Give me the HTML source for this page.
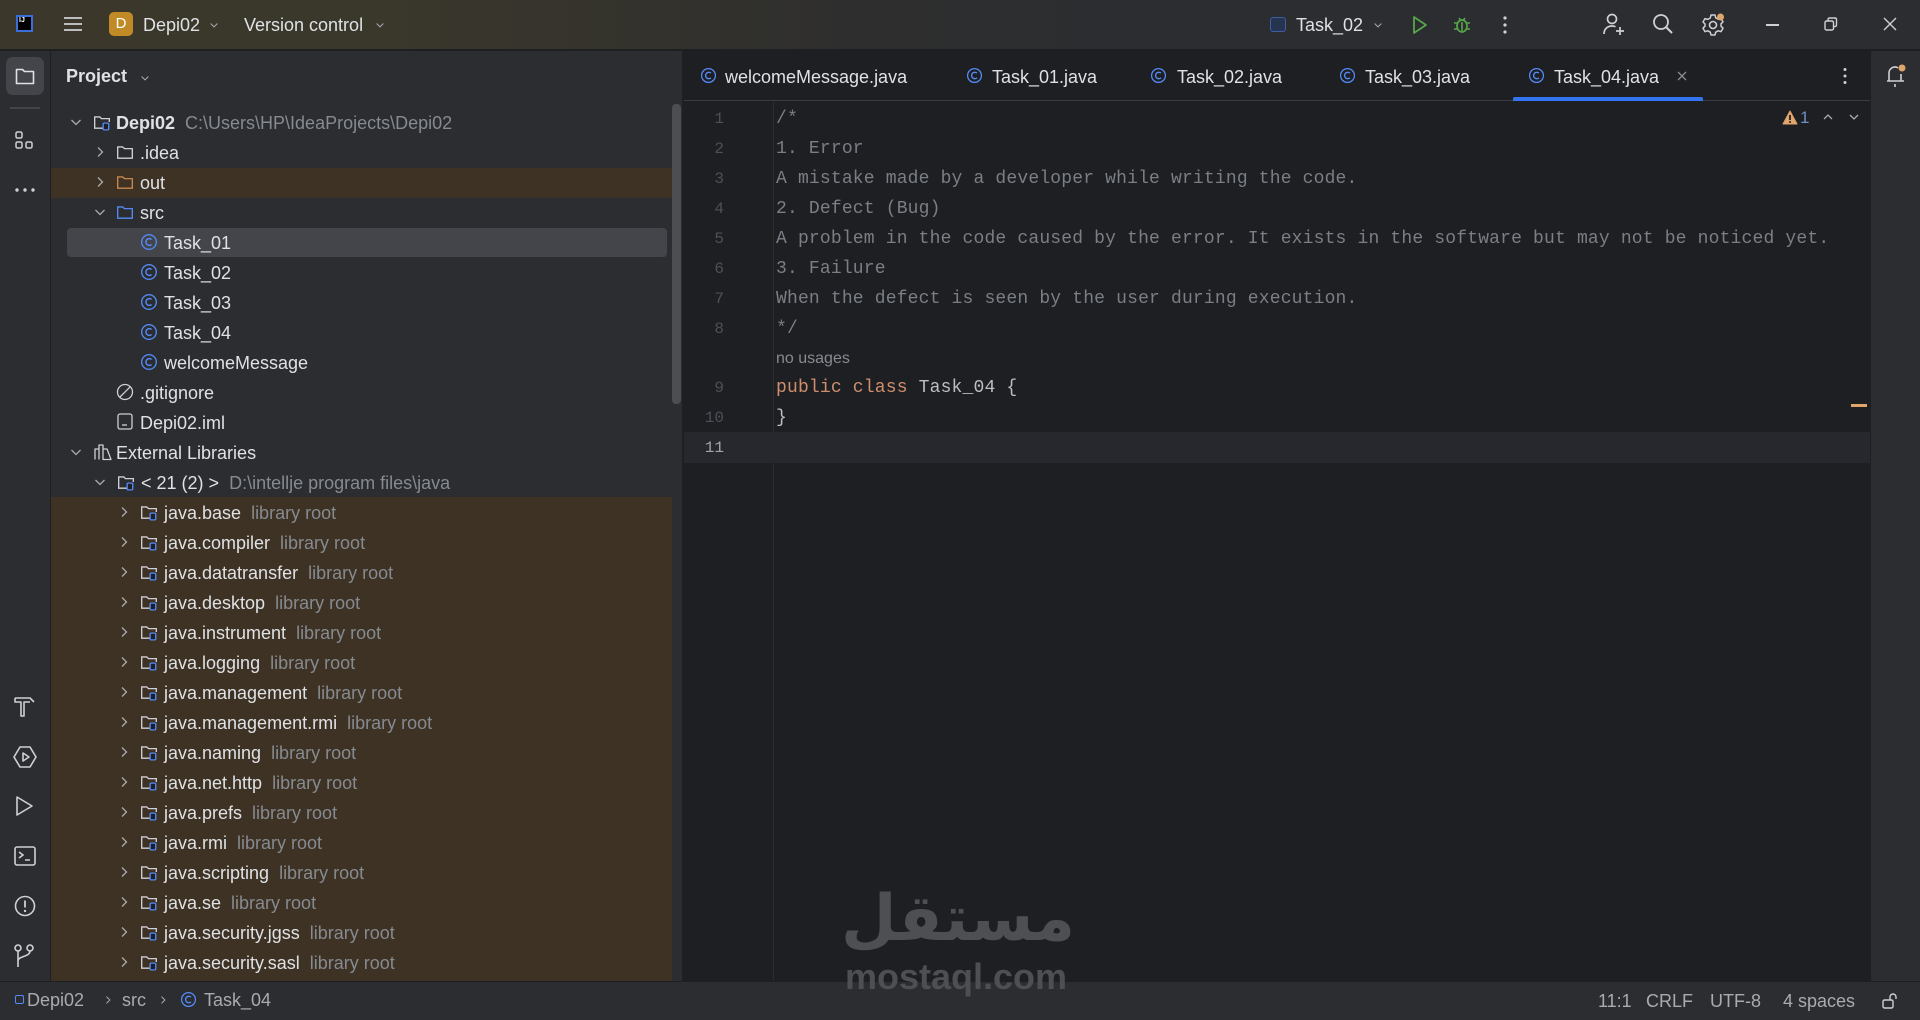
<!DOCTYPE html>
<html><head><meta charset="utf-8"><style>
*{margin:0;padding:0;box-sizing:border-box}
body{width:1920px;height:1020px;overflow:hidden;background:#1e1f22;font-family:"Liberation Sans",sans-serif;color:#dfe1e5;position:relative}
.a{position:absolute}
.t{position:absolute;font-size:18px;line-height:30px;white-space:nowrap}
.g{color:#868a91}
svg{position:absolute;overflow:visible}
.code{position:absolute;left:776px;font-family:"Liberation Mono",monospace;font-size:18px;letter-spacing:0.17px;line-height:30px;color:#7a7e85;white-space:pre}
.ln{position:absolute;width:50px;left:674px;text-align:right;font-family:"Liberation Mono",monospace;font-size:16px;line-height:30px;color:#4b5059}
</style></head><body>
<svg width="0" height="0" style="position:absolute">
<defs>
<symbol id="chr" viewBox="0 0 16 16"><path d="M6 3.5l4.5 4.5L6 12.5" fill="none" stroke="#a8abb0" stroke-width="1.3"/></symbol>
<symbol id="chd" viewBox="0 0 16 16"><path d="M3.5 6l4.5 4.5L12.5 6" fill="none" stroke="#a8abb0" stroke-width="1.3"/></symbol>
<symbol id="fold" viewBox="0 0 16 16"><path d="M1.5 3.5h4.5l1.5 1.5h7v8.5h-13z" fill="none" stroke="#ced0d6" stroke-width="1.2" stroke-linejoin="round"/></symbol>
<symbol id="foldo" viewBox="0 0 16 16"><path d="M1.5 3.5h4.5l1.5 1.5h7v8.5h-13z" fill="none" stroke="#c7874e" stroke-width="1.2" stroke-linejoin="round"/></symbol>
<symbol id="foldb" viewBox="0 0 16 16"><path d="M1.5 3.5h4.5l1.5 1.5h7v8.5h-13z" fill="none" stroke="#548af7" stroke-width="1.2" stroke-linejoin="round"/></symbol>
<symbol id="lib" viewBox="0 0 16 16"><path d="M8.5 13.5h-7v-10h4.5l1.5 1.5h7v3" fill="none" stroke="#ced0d6" stroke-width="1.2"/><rect x="9" y="9" width="5" height="6" rx="1" fill="#1e1f22" stroke="#548af7" stroke-width="1.2"/></symbol>
<symbol id="cls" viewBox="0 0 16 16"><circle cx="8" cy="8" r="6.5" fill="none" stroke="#548af7" stroke-width="1.2"/><path d="M10.3 5.8A3 3 0 1 0 10.3 10.2" fill="none" stroke="#548af7" stroke-width="1.3"/></symbol>
</defs></svg>

<!-- title bar -->
<div class="a" style="left:0;top:0;width:1920px;height:50px;background:linear-gradient(90deg,#3b382b 0%,#3a372b 20%,#2e2e2e 45%,#2b2d30 60%);border-bottom:1px solid #1e1f22"></div>
<div class="a" style="left:16px;top:15px;width:17px;height:17px;background:#000;border:2px solid #3b6fd8"></div>
<div class="a" style="left:19px;top:17px;font-size:7px;color:#fff;font-weight:bold">IJ</div>
<svg style="left:64px;top:16px" width="18" height="16"><path d="M0 2h18M0 8h18M0 14h18" stroke="#ced0d6" stroke-width="1.8"/></svg>
<div class="a" style="left:109px;top:12px;width:24px;height:24px;border-radius:5px;background:#c08b26;color:#fff;font-size:15px;text-align:center;line-height:24px">D</div>
<div class="t" style="left:143px;top:10px;color:#dfe1e5">Depi02</div>
<svg style="left:208px;top:19px" width="12" height="12"><use href="#chd" width="12" height="12"/></svg>
<div class="t" style="left:244px;top:10px">Version control</div>
<svg style="left:374px;top:19px" width="12" height="12"><use href="#chd" width="12" height="12"/></svg>
<div class="a" style="left:1270px;top:17px;width:16px;height:15px;border:1.5px solid #3d5fa6;border-radius:3px;background:#263450"></div>
<div class="t" style="left:1296px;top:10px">Task_02</div>
<svg style="left:1372px;top:19px" width="12" height="12"><use href="#chd" width="12" height="12"/></svg>
<svg style="left:1412px;top:15px" width="16" height="20"><path d="M2 2l12 8-12 8z" fill="none" stroke="#57a64a" stroke-width="1.8" stroke-linejoin="round"/></svg>
<svg style="left:1453px;top:14px" width="18" height="20"><ellipse cx="9" cy="12" rx="5" ry="6" fill="none" stroke="#57a64a" stroke-width="1.7"/><path d="M6 4l1.5 2M12 4l-1.5 2M1 9h3M14 9h3M1 15h3M14 15h3M9 8v9" stroke="#57a64a" stroke-width="1.6"/></svg>
<svg style="left:1503px;top:15px" width="4" height="20"><circle cx="2" cy="3" r="1.6" fill="#ced0d6"/><circle cx="2" cy="10" r="1.6" fill="#ced0d6"/><circle cx="2" cy="17" r="1.6" fill="#ced0d6"/></svg>
<svg style="left:1603px;top:13px" width="22" height="24"><circle cx="9" cy="6" r="4.5" fill="none" stroke="#ced0d6" stroke-width="1.7"/><path d="M1 21c0-5 3.5-8 8-8 1.5 0 2.5.3 3.5.8M17 14v8M13 18h8" fill="none" stroke="#ced0d6" stroke-width="1.7"/></svg>
<svg style="left:1652px;top:13px" width="22" height="22"><circle cx="9" cy="9" r="7" fill="none" stroke="#ced0d6" stroke-width="1.8"/><path d="M14 14l6 6" stroke="#ced0d6" stroke-width="2"/></svg>
<svg style="left:1702px;top:13px" width="24" height="24"><circle cx="11" cy="12" r="3.5" fill="none" stroke="#ced0d6" stroke-width="1.6"/><path d="M9 2h4l.7 2.8 2.5 1.4 2.8-.8 2 3.4-2 2v2.4l2 2-2 3.4-2.8-.8-2.5 1.4L13 22H9l-.7-2.8-2.5-1.4-2.8.8-2-3.4 2-2V11l-2-2 2-3.4 2.8.8 2.5-1.4z" fill="none" stroke="#ced0d6" stroke-width="1.5" stroke-linejoin="round"/><circle cx="18.5" cy="4" r="3.5" fill="#e0a56b"/></svg>
<div class="a" style="left:1766px;top:24px;width:13px;height:1.5px;background:#ced0d6"></div>
<svg style="left:1824px;top:17px" width="14" height="14"><rect x="1" y="4" width="8.5" height="9" rx="1.5" fill="none" stroke="#ced0d6" stroke-width="1.4"/><path d="M4 4V2.5c0-.8.5-1.5 1.5-1.5H11c1 0 1.5.5 1.5 1.5V8c0 1-.5 1.5-1.5 1.5H9.5" fill="none" stroke="#ced0d6" stroke-width="1.4"/></svg>
<svg style="left:1883px;top:17px" width="14" height="14"><path d="M1 1l12 12M13 1L1 13" stroke="#ced0d6" stroke-width="1.4"/></svg>

<!-- left strip -->
<div class="a" style="left:0;top:51px;width:51px;height:930px;background:#2b2d30;border-right:1px solid #1e1f22"></div>
<div class="a" style="left:6px;top:57px;width:38px;height:38px;border-radius:7px;background:#43454a"></div>
<svg style="left:15px;top:66px" width="20" height="20"><path d="M1.5 3.5h6l2 2h9v12h-17z" fill="none" stroke="#dfe1e5" stroke-width="1.6" stroke-linejoin="round"/></svg>
<div class="a" style="left:10px;top:107px;width:30px;height:2px;background:#43454a"></div>
<svg style="left:15px;top:131px" width="20" height="20"><rect x="1" y="1" width="6" height="6" rx="1.5" fill="none" stroke="#ced0d6" stroke-width="1.5"/><rect x="1" y="11" width="6" height="6" rx="1.5" fill="none" stroke="#ced0d6" stroke-width="1.5"/><rect x="11" y="11" width="6" height="6" rx="1.5" fill="none" stroke="#ced0d6" stroke-width="1.5"/></svg>
<svg style="left:15px;top:188px" width="22" height="4"><circle cx="2" cy="2" r="1.7" fill="#ced0d6"/><circle cx="10" cy="2" r="1.7" fill="#ced0d6"/><circle cx="18" cy="2" r="1.7" fill="#ced0d6"/></svg>
<svg style="left:14px;top:696px" width="22" height="22"><path d="M1 2h15l4 4M1 2v4h6v14h3V6h6" fill="none" stroke="#ced0d6" stroke-width="1.6" stroke-linejoin="round"/></svg>
<svg style="left:13px;top:745px" width="24" height="24"><path d="M7 2h10l6 10-6 10H7L1 12z" fill="none" stroke="#ced0d6" stroke-width="1.6" stroke-linejoin="round"/><path d="M10 8l6 4-6 4z" fill="none" stroke="#ced0d6" stroke-width="1.6" stroke-linejoin="round"/></svg>
<svg style="left:15px;top:796px" width="20" height="20"><path d="M2 1l15 9-15 9z" fill="none" stroke="#ced0d6" stroke-width="1.6" stroke-linejoin="round"/></svg>
<svg style="left:14px;top:846px" width="22" height="20"><rect x="1" y="1" width="20" height="18" rx="2" fill="none" stroke="#ced0d6" stroke-width="1.6"/><path d="M5 6l4 3-4 3M11 14h5" fill="none" stroke="#ced0d6" stroke-width="1.6"/></svg>
<svg style="left:14px;top:895px" width="22" height="22"><circle cx="11" cy="11" r="9.5" fill="none" stroke="#ced0d6" stroke-width="1.6"/><path d="M11 5.5v7" stroke="#ced0d6" stroke-width="1.8"/><circle cx="11" cy="16" r="1.2" fill="#ced0d6"/></svg>
<svg style="left:14px;top:944px" width="22" height="24"><circle cx="4" cy="4" r="3" fill="none" stroke="#ced0d6" stroke-width="1.6"/><circle cx="16" cy="4" r="3" fill="none" stroke="#ced0d6" stroke-width="1.6"/><path d="M4 7v16M16 7c0 6-12 5-12 10" fill="none" stroke="#ced0d6" stroke-width="1.6"/></svg>

<!-- project panel -->
<div class="a" style="left:51px;top:51px;width:632px;height:930px;background:#2b2d30;border-right:1px solid #1e1f22"></div>
<div class="t" style="left:66px;top:61px;font-weight:bold;font-size:18px">Project</div>
<svg style="left:139px;top:72px" width="12" height="12"><use href="#chd" width="12" height="12"/></svg>

<div class="a" style="left:51px;top:168px;width:621px;height:30px;background:#3d3223"></div>
<div class="a" style="left:51px;top:497px;width:621px;height:484px;background:#3d3223"></div>
<div class="a" style="left:67px;top:228px;width:600px;height:29px;border-radius:4px;background:#43454a"></div>
<div class="a" style="left:672px;top:104px;width:9px;height:300px;border-radius:4px;background:#4c4e52"></div>

<svg style="left:68px;top:114px" width="16" height="16"><use href="#chd" width="16" height="16"/></svg>
<svg style="left:93px;top:113px" width="18" height="18"><use href="#lib" width="18" height="18"/></svg>
<div class="t" style="left:116px;top:108px;font-weight:bold">Depi02 <span class="g" style="font-weight:normal">&nbsp;C:\Users\HP\IdeaProjects\Depi02</span></div>

<svg style="left:92px;top:144px" width="16" height="16"><use href="#chr" width="16" height="16"/></svg>
<svg style="left:116px;top:143px" width="18" height="18"><use href="#fold" width="18" height="18"/></svg>
<div class="t" style="left:140px;top:138px">.idea</div>

<svg style="left:92px;top:174px" width="16" height="16"><use href="#chr" width="16" height="16"/></svg>
<svg style="left:116px;top:173px" width="18" height="18"><use href="#foldo" width="18" height="18"/></svg>
<div class="t" style="left:140px;top:168px">out</div>

<svg style="left:92px;top:204px" width="16" height="16"><use href="#chd" width="16" height="16"/></svg>
<svg style="left:116px;top:203px" width="18" height="18"><use href="#foldb" width="18" height="18"/></svg>
<div class="t" style="left:140px;top:198px">src</div>

<svg style="left:140px;top:233px" width="18" height="18"><use href="#cls" width="18" height="18"/></svg>
<div class="t" style="left:164px;top:228px">Task_01</div>
<svg style="left:140px;top:263px" width="18" height="18"><use href="#cls" width="18" height="18"/></svg>
<div class="t" style="left:164px;top:258px">Task_02</div>
<svg style="left:140px;top:293px" width="18" height="18"><use href="#cls" width="18" height="18"/></svg>
<div class="t" style="left:164px;top:288px">Task_03</div>
<svg style="left:140px;top:323px" width="18" height="18"><use href="#cls" width="18" height="18"/></svg>
<div class="t" style="left:164px;top:318px">Task_04</div>
<svg style="left:140px;top:353px" width="18" height="18"><use href="#cls" width="18" height="18"/></svg>
<div class="t" style="left:164px;top:348px">welcomeMessage</div>

<svg style="left:116px;top:383px" width="18" height="18"><circle cx="9" cy="9" r="7.5" fill="none" stroke="#ced0d6" stroke-width="1.3"/><path d="M4 14L14 4" stroke="#ced0d6" stroke-width="1.3"/></svg>
<div class="t" style="left:140px;top:378px">.gitignore</div>
<svg style="left:117px;top:413px" width="16" height="18"><rect x="1" y="1" width="14" height="15" rx="2" fill="none" stroke="#ced0d6" stroke-width="1.3"/><path d="M5 12h5" stroke="#ced0d6" stroke-width="1.3"/></svg>
<div class="t" style="left:140px;top:408px">Depi02.iml</div>

<svg style="left:68px;top:444px" width="16" height="16"><use href="#chd" width="16" height="16"/></svg>
<svg style="left:94px;top:443px" width="18" height="18"><path d="M1 16.5V6h4v10.5M5 16.5V2h4v14.5M9 16.5V6h4l4 10.5z" fill="none" stroke="#ced0d6" stroke-width="1.3" stroke-linejoin="round"/></svg>
<div class="t" style="left:116px;top:438px">External Libraries</div>

<svg style="left:92px;top:474px" width="16" height="16"><use href="#chd" width="16" height="16"/></svg>
<svg style="left:117px;top:473px" width="18" height="18"><use href="#lib" width="18" height="18"/></svg>
<div class="t" style="left:141px;top:468px">&lt; 21 (2) &gt; <span class="g">&nbsp;D:\intellje program files\java</span></div>

<svg style="left:116px;top:504px" width="16" height="16"><use href="#chr" width="16" height="16"/></svg><svg style="left:140px;top:503px" width="18" height="18"><use href="#lib" width="18" height="18"/></svg><div class="t" style="left:164px;top:498px">java.base <span class="g">&nbsp;library root</span></div>
<svg style="left:116px;top:534px" width="16" height="16"><use href="#chr" width="16" height="16"/></svg><svg style="left:140px;top:533px" width="18" height="18"><use href="#lib" width="18" height="18"/></svg><div class="t" style="left:164px;top:528px">java.compiler <span class="g">&nbsp;library root</span></div>
<svg style="left:116px;top:564px" width="16" height="16"><use href="#chr" width="16" height="16"/></svg><svg style="left:140px;top:563px" width="18" height="18"><use href="#lib" width="18" height="18"/></svg><div class="t" style="left:164px;top:558px">java.datatransfer <span class="g">&nbsp;library root</span></div>
<svg style="left:116px;top:594px" width="16" height="16"><use href="#chr" width="16" height="16"/></svg><svg style="left:140px;top:593px" width="18" height="18"><use href="#lib" width="18" height="18"/></svg><div class="t" style="left:164px;top:588px">java.desktop <span class="g">&nbsp;library root</span></div>
<svg style="left:116px;top:624px" width="16" height="16"><use href="#chr" width="16" height="16"/></svg><svg style="left:140px;top:623px" width="18" height="18"><use href="#lib" width="18" height="18"/></svg><div class="t" style="left:164px;top:618px">java.instrument <span class="g">&nbsp;library root</span></div>
<svg style="left:116px;top:654px" width="16" height="16"><use href="#chr" width="16" height="16"/></svg><svg style="left:140px;top:653px" width="18" height="18"><use href="#lib" width="18" height="18"/></svg><div class="t" style="left:164px;top:648px">java.logging <span class="g">&nbsp;library root</span></div>
<svg style="left:116px;top:684px" width="16" height="16"><use href="#chr" width="16" height="16"/></svg><svg style="left:140px;top:683px" width="18" height="18"><use href="#lib" width="18" height="18"/></svg><div class="t" style="left:164px;top:678px">java.management <span class="g">&nbsp;library root</span></div>
<svg style="left:116px;top:714px" width="16" height="16"><use href="#chr" width="16" height="16"/></svg><svg style="left:140px;top:713px" width="18" height="18"><use href="#lib" width="18" height="18"/></svg><div class="t" style="left:164px;top:708px">java.management.rmi <span class="g">&nbsp;library root</span></div>
<svg style="left:116px;top:744px" width="16" height="16"><use href="#chr" width="16" height="16"/></svg><svg style="left:140px;top:743px" width="18" height="18"><use href="#lib" width="18" height="18"/></svg><div class="t" style="left:164px;top:738px">java.naming <span class="g">&nbsp;library root</span></div>
<svg style="left:116px;top:774px" width="16" height="16"><use href="#chr" width="16" height="16"/></svg><svg style="left:140px;top:773px" width="18" height="18"><use href="#lib" width="18" height="18"/></svg><div class="t" style="left:164px;top:768px">java.net.http <span class="g">&nbsp;library root</span></div>
<svg style="left:116px;top:804px" width="16" height="16"><use href="#chr" width="16" height="16"/></svg><svg style="left:140px;top:803px" width="18" height="18"><use href="#lib" width="18" height="18"/></svg><div class="t" style="left:164px;top:798px">java.prefs <span class="g">&nbsp;library root</span></div>
<svg style="left:116px;top:834px" width="16" height="16"><use href="#chr" width="16" height="16"/></svg><svg style="left:140px;top:833px" width="18" height="18"><use href="#lib" width="18" height="18"/></svg><div class="t" style="left:164px;top:828px">java.rmi <span class="g">&nbsp;library root</span></div>
<svg style="left:116px;top:864px" width="16" height="16"><use href="#chr" width="16" height="16"/></svg><svg style="left:140px;top:863px" width="18" height="18"><use href="#lib" width="18" height="18"/></svg><div class="t" style="left:164px;top:858px">java.scripting <span class="g">&nbsp;library root</span></div>
<svg style="left:116px;top:894px" width="16" height="16"><use href="#chr" width="16" height="16"/></svg><svg style="left:140px;top:893px" width="18" height="18"><use href="#lib" width="18" height="18"/></svg><div class="t" style="left:164px;top:888px">java.se <span class="g">&nbsp;library root</span></div>
<svg style="left:116px;top:924px" width="16" height="16"><use href="#chr" width="16" height="16"/></svg><svg style="left:140px;top:923px" width="18" height="18"><use href="#lib" width="18" height="18"/></svg><div class="t" style="left:164px;top:918px">java.security.jgss <span class="g">&nbsp;library root</span></div>
<svg style="left:116px;top:954px" width="16" height="16"><use href="#chr" width="16" height="16"/></svg><svg style="left:140px;top:953px" width="18" height="18"><use href="#lib" width="18" height="18"/></svg><div class="t" style="left:164px;top:948px">java.security.sasl <span class="g">&nbsp;library root</span></div>

<!-- editor tabs -->
<div class="a" style="left:684px;top:51px;width:1186px;height:50px;background:#1e1f22;border-bottom:1px solid #393b40"></div>
<svg style="left:700px;top:67px" width="17" height="17"><use href="#cls" width="17" height="17"/></svg><div class="t" style="left:725px;top:62px">welcomeMessage.java</div>
<svg style="left:966px;top:67px" width="17" height="17"><use href="#cls" width="17" height="17"/></svg><div class="t" style="left:992px;top:62px">Task_01.java</div>
<svg style="left:1150px;top:67px" width="17" height="17"><use href="#cls" width="17" height="17"/></svg><div class="t" style="left:1177px;top:62px">Task_02.java</div>
<svg style="left:1339px;top:67px" width="17" height="17"><use href="#cls" width="17" height="17"/></svg><div class="t" style="left:1365px;top:62px">Task_03.java</div>
<svg style="left:1528px;top:67px" width="17" height="17"><use href="#cls" width="17" height="17"/></svg><div class="t" style="left:1554px;top:62px">Task_04.java</div>
<svg style="left:1677px;top:71px" width="10" height="10"><path d="M1 1l8 8M9 1L1 9" stroke="#868a91" stroke-width="1.3"/></svg>
<div class="a" style="left:1513px;top:97px;width:190px;height:4px;background:#3574f0;border-radius:2px 2px 0 0"></div>
<svg style="left:1843px;top:67px" width="4" height="18"><circle cx="2" cy="2.5" r="1.5" fill="#ced0d6"/><circle cx="2" cy="9" r="1.5" fill="#ced0d6"/><circle cx="2" cy="15.5" r="1.5" fill="#ced0d6"/></svg>

<!-- editor -->
<div class="a" style="left:773px;top:102px;width:1px;height:879px;background:#2b2d30"></div>
<div class="a" style="left:684px;top:432px;width:1186px;height:31px;background:#26282e"></div>
<div class="ln" style="top:104px">1</div><div class="code" style="top:104px">/*</div>
<div class="ln" style="top:134px">2</div><div class="code" style="top:134px">1. Error</div>
<div class="ln" style="top:164px">3</div><div class="code" style="top:164px">A mistake made by a developer while writing the code.</div>
<div class="ln" style="top:194px">4</div><div class="code" style="top:194px">2. Defect (Bug)</div>
<div class="ln" style="top:224px">5</div><div class="code" style="top:224px">A problem in the code caused by the error. It exists in the software but may not be noticed yet.</div>
<div class="ln" style="top:254px">6</div><div class="code" style="top:254px">3. Failure</div>
<div class="ln" style="top:284px">7</div><div class="code" style="top:284px">When the defect is seen by the user during execution.</div>
<div class="ln" style="top:314px">8</div><div class="code" style="top:314px">*/</div>
<div class="t" style="left:776px;top:344px;font-size:16px;color:#868a91">no usages</div>
<div class="ln" style="top:373px">9</div><div class="code" style="top:373px;color:#bcbec4"><span style="color:#cf8e6d">public class</span> Task_04 {</div>
<div class="ln" style="top:403px">10</div><div class="code" style="top:403px;color:#bcbec4">}</div>
<div class="ln" style="top:433px;color:#a1a3ab">11</div>
<svg style="left:1782px;top:110px" width="16" height="15"><path d="M8 1L15 14H1z" fill="#e0a56b" stroke="#e0a56b" stroke-linejoin="round"/><path d="M8 5v5" stroke="#1e1f22" stroke-width="1.8"/><circle cx="8" cy="12" r="1" fill="#1e1f22"/></svg>
<div class="t" style="left:1800px;top:103px;color:#6f8fc5;font-size:17px">1</div>
<svg style="left:1823px;top:113px" width="10" height="8"><path d="M1 6l4-4 4 4" fill="none" stroke="#a8abb0" stroke-width="1.3"/></svg>
<svg style="left:1849px;top:113px" width="10" height="8"><path d="M1 2l4 4 4-4" fill="none" stroke="#a8abb0" stroke-width="1.3"/></svg>
<div class="a" style="left:1851px;top:404px;width:16px;height:3px;background:#e0a56b"></div>

<!-- right strip -->
<div class="a" style="left:1870px;top:51px;width:50px;height:930px;background:#2b2d30;border-left:1px solid #1e1f22"></div>
<svg style="left:1885px;top:64px" width="22" height="24"><path d="M4 17V9a6 6 0 0 1 9-5.2M4 17h13M2 17h17M10 20v3" fill="none" stroke="#ced0d6" stroke-width="1.6"/><path d="M16 10v7" stroke="#ced0d6" stroke-width="1.6"/><circle cx="17" cy="4" r="3.5" fill="#e0a56b"/></svg>

<!-- status bar -->
<div class="a" style="left:0;top:981px;width:1920px;height:39px;background:#2b2d30;border-top:1px solid #1e1f22"></div>
<div class="a" style="left:15px;top:995px;width:9px;height:9px;border:1.5px solid #548af7;border-radius:2px"></div>
<div class="t" style="left:27px;top:985px;color:#a8abb0">Depi02</div>
<svg style="left:102px;top:994px" width="12" height="12"><use href="#chr" width="12" height="12"/></svg>
<div class="t" style="left:122px;top:985px;color:#a8abb0">src</div>
<svg style="left:157px;top:994px" width="12" height="12"><use href="#chr" width="12" height="12"/></svg>
<svg style="left:180px;top:991px" width="17" height="17"><use href="#cls" width="17" height="17"/></svg>
<div class="t" style="left:204px;top:985px;color:#a8abb0">Task_04</div>
<div class="t" style="left:1598px;top:986px;color:#a8abb0">11:1</div>
<div class="t" style="left:1646px;top:986px;color:#a8abb0">CRLF</div>
<div class="t" style="left:1710px;top:986px;color:#a8abb0">UTF-8</div>
<div class="t" style="left:1783px;top:986px;color:#a8abb0">4 spaces</div>
<svg style="left:1882px;top:993px" width="16" height="16"><rect x="1" y="7" width="10" height="8" rx="1.5" fill="none" stroke="#ced0d6" stroke-width="1.4"/><path d="M8 7V4a3 3 0 0 1 6 0v2" fill="none" stroke="#ced0d6" stroke-width="1.4"/></svg>

<!-- watermark -->
<div class="a" style="left:845px;top:882px;width:230px;text-align:center;font-family:'DejaVu Sans',sans-serif;font-size:64px;line-height:74px;color:#4d4f53;font-weight:bold" dir="rtl">مستقل</div>
<div class="a" style="left:845px;top:957px;font-size:36px;line-height:40px;color:#4d4f53;font-weight:bold">mostaql.com</div>
</body></html>
